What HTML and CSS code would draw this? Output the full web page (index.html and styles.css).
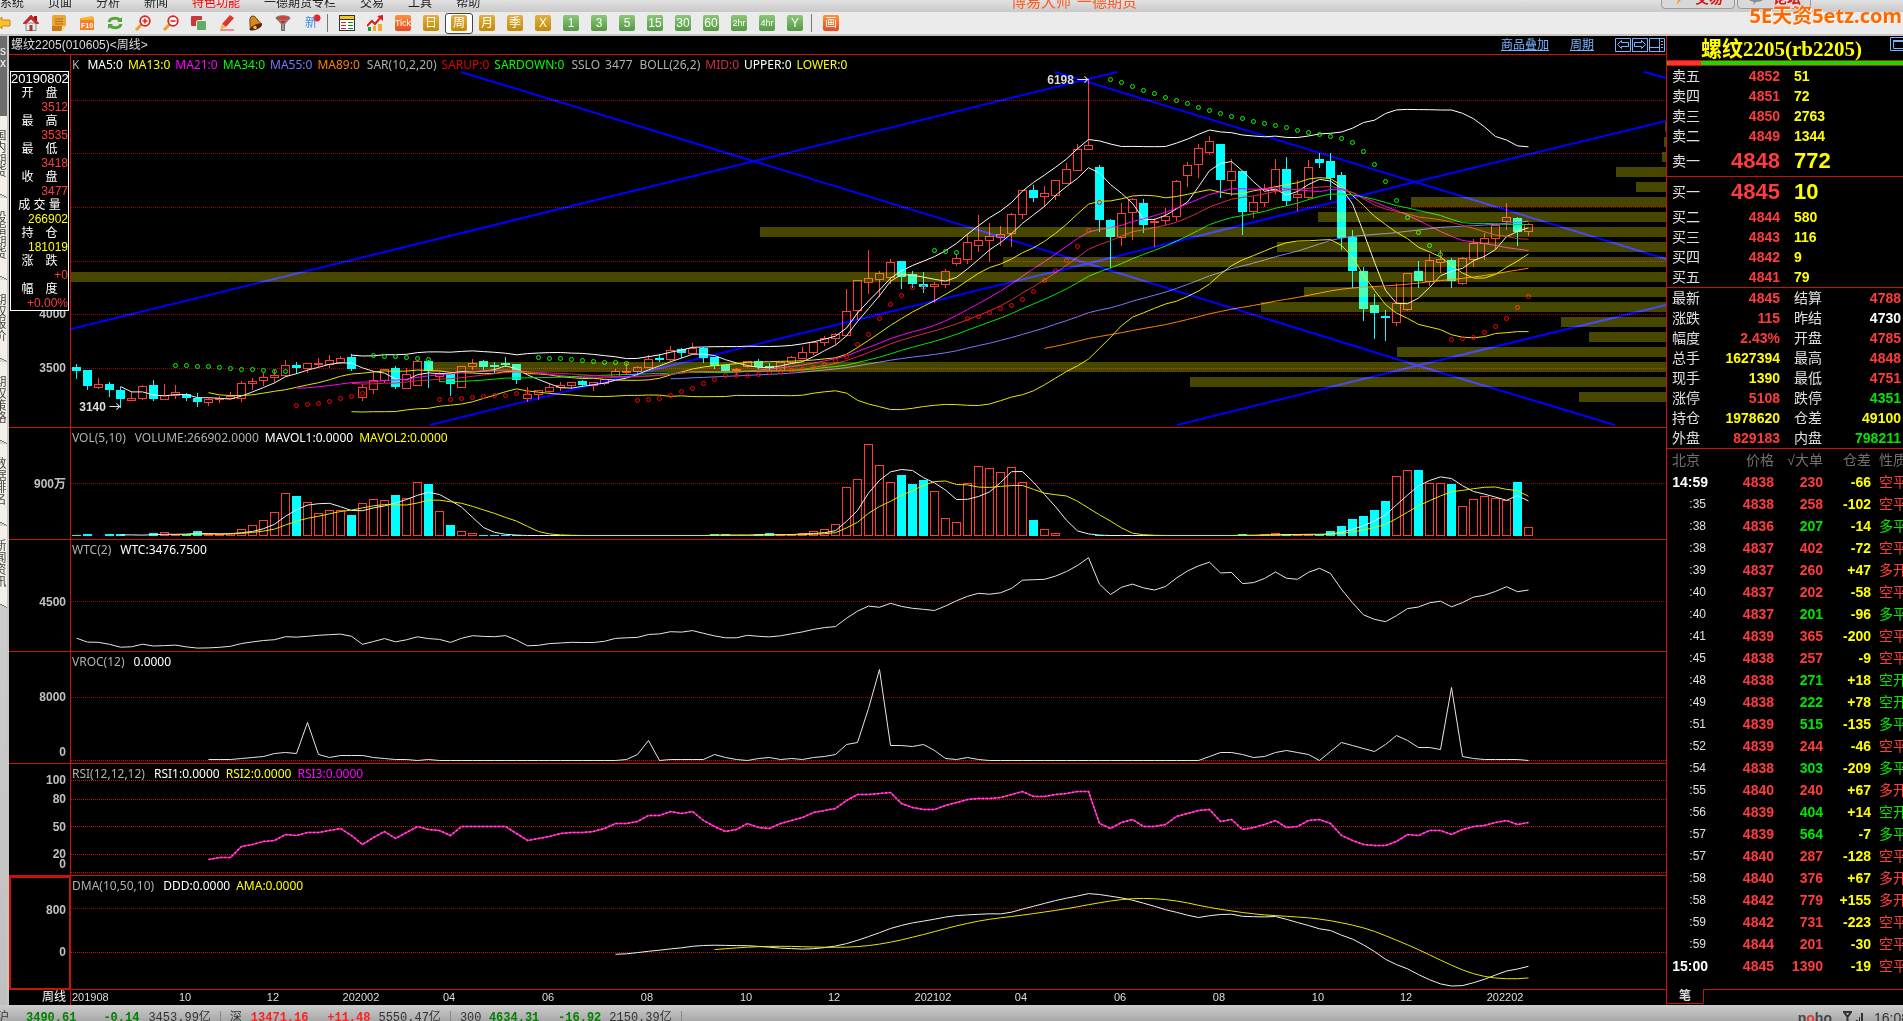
FILE: index.html
```html
<!DOCTYPE html>
<html lang="zh-CN">
<head>
<meta charset="utf-8">
<title>螺纹2205 周线</title>
<link rel="stylesheet" href="styles.css">
</head>
<body>
<header class="menubar">
  <nav class="menu">
    <a href="#">系统</a><a href="#">页面</a><a href="#">分析</a><a href="#">新闻</a><a href="#" class="hot">特色功能</a><a href="#">一德期货专栏</a><a href="#">交易</a><a href="#">工具</a><a href="#">帮助</a>
  </nav>
  <div class="app-name"><span>博易大师</span><span>一德期货</span></div>
  <div class="menu-actions">
    <button type="button"><svg width="14" height="14" viewBox="0 0 14 14"><path d="M9 0 2 8h4l-3 6 9-9H8l4-5z" fill="#f79a1c"/></svg>交易</button>
    <button type="button"><svg width="18" height="14" viewBox="0 0 18 14"><path d="M1 1h16v6c0 2-3 4-8 4l-3 3 1-3C3 10 1 9 1 7z" fill="#8c8c8c"/></svg>论坛</button>
  </div>
</header>
<div class="toolbar">
  <button type="button" aria-label="后退"><svg viewBox="0 0 16 16"><path d="M1 8l6-6v3h8v6H7v3z" fill="#fbc02d" stroke="#c98a10"/></svg></button>
  <button type="button" aria-label="主页"><svg viewBox="0 0 16 16"><path d="M11 1h3v5h-3z" fill="#a11"/><path d="M3 8h10v7.500H3z" fill="#e9e9e9" stroke="#888"/><path d="M8 0 0 8.500h3L8 4l5 4.500h3z" fill="#d42424" stroke="#8c1212" stroke-width=".6"/><path d="M6.500 10h3v6h-3z" fill="#a33"/></svg></button>
  <button type="button" aria-label="记事"><svg viewBox="0 0 16 16"><path d="M2 0h12l1 2v9l-4 5H1V2z" fill="#eba733"/><path d="M1 11h10l-1 5H1z" fill="#c87a18"/><path d="M4 4h8M4 6.500h8M4 9h8" stroke="#b06f14"/><path d="M15 11l-4 5v-5z" fill="#f8dca0"/></svg></button>
  <button type="button" aria-label="F10"><svg viewBox="0 0 16 16"><path d="M1 3h14v12H1z" fill="#f4802c"/><path d="M1 3l13-2 1 4H1z" fill="#f9b233"/><text x="8" y="12.500" text-anchor="middle" class="svg-f10">F10</text></svg></button>
  <button type="button" aria-label="刷新"><svg viewBox="0 0 16 16" fill="none" stroke="#57a437" stroke-width="3"><path d="M2 7c1-4 7-5 11-2M14 9c-1 4-7 5-11 2"/><path d="M15 2v5h-5zM1 14V9h5z" fill="#57a437" stroke="none"/></svg></button>
  <button type="button" aria-label="放大"><svg viewBox="0 0 16 16"><path d="M7 9l-6 6" stroke="#f0a020" stroke-width="3"/><circle cx="10" cy="6" r="4.800" fill="#fff" stroke="#e2231a" stroke-width="1.800"/><path d="M7.500 6h5M10 3.500v5" stroke="#e2231a" stroke-width="1.600"/></svg></button>
  <button type="button" aria-label="缩小"><svg viewBox="0 0 16 16"><path d="M7 9l-6 6" stroke="#f0a020" stroke-width="3"/><circle cx="10" cy="6" r="4.800" fill="#fff" stroke="#e2231a" stroke-width="1.800"/><path d="M7.500 6h5" stroke="#e2231a" stroke-width="1.600"/></svg></button>
  <button type="button" aria-label="窗口"><svg viewBox="0 0 16 16"><rect x="0" y="1" width="11" height="10" rx="1" fill="#c8373a"/><rect x="5.500" y="5.500" width="10" height="10" rx="1.500" fill="#63ab62" stroke="#e7f0e7"/></svg></button>
  <button type="button" aria-label="画线"><svg viewBox="0 0 16 16"><path d="M1 15h14" stroke="#e33"/><path d="M3 9l8-9 4 3-8 9z" fill="#e0352b"/><path d="M3 9l4 3-6 3z" fill="#f4b650"/></svg></button>
  <button type="button" aria-label="预警"><svg viewBox="0 0 16 16"><path d="M5 1c5 0 5 5 10 8L3 15C4 9 1 3 5 1z" fill="#d98a1e" stroke="#6d3a08"/><ellipse cx="9" cy="12" rx="6.500" ry="2.600" transform="rotate(-25 9 12)" fill="#5a2408"/><circle cx="8" cy="12.500" r="1.700" fill="#f5c34e"/></svg></button>
  <button type="button" aria-label="筛选"><svg viewBox="0 0 16 16"><path d="M1 3l5.500 6v6.500h3V9L15 3z" fill="#999" stroke="#666"/><ellipse cx="8" cy="3" rx="7" ry="2.200" fill="#e33a34" stroke="#777"/><path d="M5 6h6L8 9z" fill="#d22"/></svg></button>
  <button type="button" class="new" aria-label="新功能">新</button>
  <i class="sep"></i>
  <button type="button" aria-label="报价"><svg viewBox="0 0 16 16"><rect x=".5" y=".5" width="15" height="15" fill="#fff" stroke="#333"/><path d="M1 1h14v3H1z" fill="#f3c61e"/><path d="M1 4.500h14" stroke="#333"/><path d="M2 7.500h5M2 10.500h5M2 13.500h5" stroke="#d22"/><path d="M9 7.500h5M9 10.500h5M9 13.500h5" stroke="#181"/></svg></button>
  <button type="button" aria-label="走势"><svg viewBox="0 0 16 16"><path d="M1 12h3v4H1z" fill="#2a9a2a"/><path d="M6 11h3v5H6zM11 9h4v7h-4z" fill="#f1ae26"/><path d="M0 11l5-5 3 3 6-7" fill="none" stroke="#d81e1e" stroke-width="2"/><path d="M16 0v6l-6-5z" fill="#d81e1e"/></svg></button>
  <button type="button"><b class="chip orange tiny">Tick</b></button>
  <button type="button"><b class="chip gold">日</b></button>
  <button type="button" class="selected"><b class="chip gold">周</b></button>
  <button type="button"><b class="chip gold">月</b></button>
  <button type="button"><b class="chip gold">季</b></button>
  <button type="button"><b class="chip gold">X</b></button>
  <button type="button"><b class="chip green">1</b></button>
  <button type="button"><b class="chip green">3</b></button>
  <button type="button"><b class="chip green">5</b></button>
  <button type="button"><b class="chip green">15</b></button>
  <button type="button"><b class="chip green">30</b></button>
  <button type="button"><b class="chip green">60</b></button>
  <button type="button"><b class="chip green tiny">2hr</b></button>
  <button type="button"><b class="chip green tiny">4hr</b></button>
  <button type="button"><b class="chip green">Y</b></button>
  <i class="sep"></i>
  <button type="button"><b class="chip orange">画</b></button>
</div>
<div class="watermark">5E天资5etz.com</div>

<div class="workspace">
  <nav class="side-tabs">
    <a href="#" class="active"><span>s</span><span>x</span></a>
    <a href="#">国内期货</a>
    <a href="#">股指期货</a>
    <a href="#">期权报价</a>
    <a href="#">期权策略</a>
    <a href="#">数据排名</a>
    <a href="#">新闻资讯</a>
  </nav>

  <main class="charts">
    <div class="chart-title">
      <span>螺纹2205(010605)&lt;周线&gt;</span>
      <span class="chart-links">
        <a href="#">商品叠加</a><a href="#">周期</a>
        <span class="nav-boxes">
          <button type="button" aria-label="向左"><svg viewBox="0 0 16 14"><path d="M.5.5h15v13H.5zM2.500 6.500l4-4v2h7v4h-7v2z"/></svg></button>
          <button type="button" aria-label="向右"><svg viewBox="0 0 16 14"><path d="M.5.5h15v13H.5zM13.500 6.500l-4-4v2h-7v4h7v2z"/></svg></button>
          <button type="button" aria-label="布局"><svg viewBox="0 0 16 14"><path d="M.5.5h15v13H.5zM10.500 1v12M1 9.500h9.500M12 3.500h2M12 6.500h2M12 9.500h2"/></svg></button>
        </span>
      </span>
    </div>

    <section class="pane" id="main">
      <div class="axis">
        <dl class="info">
          <dt class="date">20190802</dt>
          <dt>开　盘</dt><dd>3512</dd>
          <dt>最　高</dt><dd>3535</dd>
          <dt>最　低</dt><dd>3418</dd>
          <dt>收　盘</dt><dd>3477</dd>
          <dt>成 交 量</dt><dd class="yellow">266902</dd>
          <dt>持　仓</dt><dd class="yellow">181019</dd>
          <dt>涨　跌</dt><dd>+0</dd>
          <dt>幅　度</dt><dd>+0.00%</dd>
        </dl>
      </div>
      <div class="plot">
        <p class="legend">
          <span>K</span><span class="white group">MA5:0</span><span class="yellow">MA13:0</span><span class="magenta">MA21:0</span><span class="lime">MA34:0</span><span class="violet">MA55:0</span><span class="orange-t">MA89:0</span><span class="group">SAR(10,2,20)</span><span class="red">SARUP:0</span><span class="lime">SARDOWN:0</span><span class="group">SSLO</span><span>3477</span><span class="group">BOLL(26,2)</span><span class="crimson">MID:0</span><span class="white">UPPER:0</span><span class="yellow">LOWER:0</span>
        </p>
      </div>
    </section>
    <section class="pane" id="vol"><div class="axis"></div><div class="plot">
      <p class="legend sub"><span>VOL(5,10)</span><span>VOLUME:266902.0000</span><span class="white">MAVOL1:0.0000</span><span class="yellow">MAVOL2:0.0000</span></p></div></section>
    <section class="pane" id="wtc"><div class="axis"></div><div class="plot">
      <p class="legend sub"><span>WTC(2)</span><span class="white">WTC:3476.7500</span></p></div></section>
    <section class="pane" id="vroc"><div class="axis"></div><div class="plot">
      <p class="legend sub"><span>VROC(12)</span><span class="white">0.0000</span></p></div></section>
    <section class="pane" id="rsi"><div class="axis"></div><div class="plot">
      <p class="legend sub"><span>RSI(12,12,12)</span><span class="white">RSI1:0.0000</span><span class="yellow">RSI2:0.0000</span><span class="magenta">RSI3:0.0000</span></p></div></section>
    <section class="pane focused" id="dma"><div class="axis"></div><div class="plot">
      <p class="legend sub"><span>DMA(10,50,10)</span><span class="white">DDD:0.0000</span><span class="yellow">AMA:0.0000</span></p></div></section>
    <div class="time-axis"><span class="period">周线</span><div id="dates"></div></div>
  </main>

  <aside class="quote">
    <h1>螺纹2205(rb2205)<button type="button" aria-label="窗口"><svg viewBox="0 0 16 14"><path d="M.5.5h16v13H.5zM3.500 4.500h12v7h-12zM3 3.500h13"/></svg></button></h1>
    <div class="ratio"><i></i></div>
    <table class="book">
      <tr><th>卖五</th><td>4852</td><td>51</td></tr>
      <tr><th>卖四</th><td>4851</td><td>72</td></tr>
      <tr><th>卖三</th><td>4850</td><td>2763</td></tr>
      <tr><th>卖二</th><td>4849</td><td>1344</td></tr>
      <tr class="best"><th>卖一</th><td>4848</td><td>772</td></tr>
    </table>
    <table class="book">
      <tr class="best"><th>买一</th><td>4845</td><td>10</td></tr>
      <tr><th>买二</th><td>4844</td><td>580</td></tr>
      <tr><th>买三</th><td>4843</td><td>116</td></tr>
      <tr><th>买四</th><td>4842</td><td>9</td></tr>
      <tr><th>买五</th><td>4841</td><td>79</td></tr>
    </table>
    <table class="stats">
      <tr><th>最新</th><td>4845</td><th>结算</th><td>4788</td></tr>
      <tr><th>涨跌</th><td>115</td><th>昨结</th><td class="white">4730</td></tr>
      <tr><th>幅度</th><td>2.43%</td><th>开盘</th><td>4785</td></tr>
      <tr><th>总手</th><td class="yellow">1627394</td><th>最高</th><td>4848</td></tr>
      <tr><th>现手</th><td class="yellow">1390</td><th>最低</th><td>4751</td></tr>
      <tr><th>涨停</th><td>5108</th><th>跌停</th><td class="green-t">4351</td></tr>
      <tr><th>持仓</th><td class="yellow">1978620</td><th>仓差</th><td class="yellow">49100</td></tr>
      <tr><th>外盘</th><td>829183</td><th>内盘</th><td class="green-t">798211</td></tr>
    </table>
    <table class="ticks">
      <thead><tr><th>北京</th><th>价格</th><th>√大单</th><th>仓差</th><th>性质</th></tr></thead>
      <tbody id="ticks"></tbody>
    </table>
    <div class="quote-tabs"><button type="button">笔</button><i></i></div>
  </aside>
</div>

<footer class="status">
  <div class="index"><span>沪</span><b class="down">3490.61</b><b class="down chg">-0.14</b><span>3453.99亿</span></div>
  <div class="index"><span>深</span><b class="up">13471.16</b><b class="up chg">+11.48</b><span>5550.47亿</span></div>
  <div class="index"><span>300</span><b class="down">4634.31</b><b class="down chg">-16.92</b><span>2150.39亿</span></div>
  <div class="system"><b>p<em>o</em>bo</b>
    <svg width="22" height="14" viewBox="0 0 22 14"><path d="M1 1h9M2 1l3.500 5L9 1M5.500 5v9" fill="none" stroke="#333" stroke-width="2"/><path d="M11 12h2v2h-2zM14 9h2v5h-2zM17 6h1v8h-1zM19 2h2v12h-2z" fill="#333"/></svg>
    <span>16:08</span></div>
</footer>
<script src="chart.js"></script>
</body>
</html>
```
FILE: styles.css
```css
* { box-sizing: border-box; }
body {
  margin: 0;
  height: 100vh;
  display: flex;
  flex-direction: column;
  overflow: hidden;
  position: relative;
  background: #c8c8c8;
  font: 12px/14px "Liberation Sans", "Noto Sans CJK SC", sans-serif;
}
button { font: inherit; padding: 0; margin: 0; border: 0; background: none; color: inherit; }
a { color: inherit; text-decoration: none; }
table { border-collapse: collapse; table-layout: fixed; width: 100%; }
th, td { padding: 0; white-space: nowrap; }

.white { color: #fff; }
.yellow { color: #ff0; }
.magenta { color: #f0f; }
.lime { color: #0f0; }
.violet { color: #7878ff; }
.orange-t { color: #ff8000; }
.red { color: #e00000; }
.crimson { color: #d02c48; }

/* menu bar */
.menubar {
  flex: 0 0 12px;
  display: flex;
  align-items: flex-end;
  overflow: hidden;
  background: linear-gradient(#e2e2e2, #c9c9c9);
  color: #1c1c1c;
}
.menu { display: flex; gap: 24px; width: 1011px; line-height: 20px; margin-bottom: -1px; white-space: nowrap; }
.menu .hot { color: #f00; }
.app-name { display: flex; gap: 6px; flex: 1; font-size: 15px; line-height: 20px; color: #ff5a1e; }
.menu-actions { display: flex; gap: 2px; margin-right: 92px; align-self: flex-end; margin-bottom: 3px; }
.menu-actions button {
  display: flex; align-items: center; justify-content: center; gap: 8px;
  width: 74px; height: 22px;
  border: 1px solid #9a9a9a; border-radius: 4px;
  background: #d9d9d9; color: #d81818;
  font-size: 14px; font-weight: bold;
}

/* tool bar */
.toolbar {
  flex: 0 0 24px;
  display: flex;
  align-items: center;
  margin-left: -11px;
  background: #ebebeb;
  border-bottom: 2px solid #c9c5c1;
}
.toolbar button { flex: 0 0 28px; height: 21px; display: flex; align-items: center; justify-content: center; }
.toolbar svg { width: 16px; height: 16px; }
.toolbar .selected { border: 1px solid #444; border-radius: 3px; background: #fff; }
.toolbar .sep { flex: 0 0 8px; height: 18px; background: linear-gradient(#777, #777) 2px 0 / 1px 100% no-repeat; }
.toolbar .new {
  color: #3c8ce8;
  background: radial-gradient(circle at 20px 5px, #f02020 3px, transparent 4px);
}
.svg-f10 { font: bold 7px "Liberation Sans", sans-serif; fill: #fff; }
.chip {
  width: 16px; height: 16px; border-radius: 2px;
  font-weight: normal; font-size: 12px; line-height: 16px; text-align: center;
  color: #fff;
  display: flex; justify-content: center;
}
.gold { background: linear-gradient(#dfb23c, #c48a06); }
.green { background: linear-gradient(#8ac878, #559a44); }
.orange { background: linear-gradient(#f9953c, #ea4a24); }
.tiny { font-size: 9px; }

.watermark {
  position: absolute; right: 1px; top: 3px;
  font: bold 20px/26px "Noto Sans", "Noto Sans CJK SC", sans-serif;
  color: #ff6a00;
  text-shadow: 1px 1px 0 #fff, -1px 0 0 #fbe8d8;
}

.workspace { flex: 1; min-height: 0; display: flex; background: #000; }

/* side tabs */
.side-tabs {
  flex: 0 0 9px;
  display: flex; flex-direction: column;
  overflow: hidden;
  background: linear-gradient(#e0e0e0, #c0c0c0);
  border-right: 2px solid #c9c5c1;
  color: #444;
}
.side-tabs a {
  flex: 0 0 82px;
  writing-mode: vertical-rl;
  display: flex; align-items: flex-start; justify-content: center;
  width: 7px;
  padding: 0 2px 8px 0;
  line-height: 12px;
  background: linear-gradient(26deg, transparent 3px, #777 3px, #777 4px, #f2f0e9 4px);
}
.side-tabs .active {
  flex-basis: 80px;
  writing-mode: horizontal-tb;
  flex-direction: column; justify-content: flex-start; align-items: flex-start;
  padding-top: 9px;
  background: #6c6c6c; color: #fff;
}

/* charts */
.charts {
  flex: 1; min-width: 0;
  display: grid;
  grid-template-rows: 19px minmax(0, 373fr) repeat(4, minmax(0, 112fr)) minmax(0, 114fr) 15px;
}
.chart-title {
  display: flex; justify-content: space-between; align-items: center;
  padding-left: 2px;
  color: #ddd;
  border-bottom: 1px solid #c81400;
}
.chart-links { display: flex; gap: 21px; color: #78b4ff; }
.chart-links a { text-decoration: underline; }
.nav-boxes { display: flex; gap: 1px; margin-right: 1px; }
.nav-boxes button, .quote h1 button { width: 16px; height: 14px; display: block; }
.nav-boxes svg, .quote h1 svg { width: 16px; height: 14px; display: block; fill: none; stroke: #78b4ff; }

.pane { display: grid; grid-template-columns: 62px minmax(0, 1fr); border-bottom: 1px solid #c81400; min-height: 0; }
.axis { position: relative; border-right: 1px solid #c81400; color: #c0c0c0; }
.focused .axis { border: 2px solid #c81400; border-bottom-width: 1px; }
.axis .tick { position: absolute; right: 4px; transform: translateY(-50%); font-weight: bold; line-height: 12px; }
.focused .tick { right: 3px; }
.plot { position: relative; min-width: 0; min-height: 0; overflow: hidden; }
.plot svg { position: absolute; inset: 0; width: 100%; height: 100%; display: block; }
.legend {
  display: flex; gap: 5px; margin: 0; padding: 2px 0 0 1px;
  font: 12px/16px "Noto Sans", sans-serif;
  color: #b0b0b0; white-space: nowrap;
  position: relative; z-index: 1;
}
.legend .group { margin-left: 2px; }
.legend .group:nth-child(2) { margin-left: 3px; }
.legend.sub { gap: 6px; }
.legend.sub span:first-child { margin-right: 3px; }
.callout {
  position: absolute; transform: translate(-100%, -50%);
  display: flex; align-items: center; gap: 3px;
  color: #ddd; font-weight: bold; line-height: 14px;
}
.callout i { width: 11px; height: 7px; background: linear-gradient(#ddd, #ddd) 0 3px / 100% 1px no-repeat; position: relative; }
.callout i::after { content: ""; position: absolute; right: 1px; top: 1px; width: 4px; height: 4px; border: solid #ddd; border-width: 1px 1px 0 0; transform: rotate(45deg); }

.info {
  position: absolute; z-index: 2; top: 16px; left: 1px; right: 1px;
  margin: 0; border: 1px solid #fff; background: #000;
  color: #fff; line-height: 14px;
}
.info dt { text-align: center; white-space: pre; height: 14px; }
.info .date { font-size: 13px; }
.info dd { margin: 0; text-align: right; color: #ff3c3c; height: 14px; }
.info dd.yellow { color: #ff0; }

.time-axis { display: grid; grid-template-columns: 62px 1fr; color: #ddd; font-size: 11px; line-height: 14px; overflow: hidden; }
.period { text-align: right; padding-right: 4px; border-right: 1px solid #c81400; color: #fff; font-size: 12px; }
#dates { position: relative; }
#dates span { position: absolute; transform: translateX(-50%); }
#dates span:first-child { transform: none; }

/* quote panel */
.quote {
  flex: 0 0 237px;
  display: flex; flex-direction: column;
  overflow: hidden;
  border-left: 1px solid #c81400;
  font-size: 14px; font-weight: bold;
}
.quote h1 {
  margin: 0; height: 24px; flex: none;
  display: flex; justify-content: space-between;
  padding: 1px 0 0 34px;
  font: bold 21px/24px "Liberation Serif", "Noto Sans CJK SC", serif;
  color: #ff0;
  white-space: nowrap;
}
.quote h1 button { margin-right: -3px; }
.ratio { flex: none; border: solid #c81400; border-width: 1px 0; height: 6px; background: #00e600; padding-left: 1px; }
.ratio i { display: block; width: 14%; height: 4px; background: #ff3232; }
.quote th { font-weight: normal; color: #e0e0e0; text-align: left; }
.quote td { color: #ff3c3c; text-align: right; }
.book, .stats { line-height: 20px; border-bottom: 1px solid #c81400; flex: none; border-collapse: separate; border-spacing: 0; }
.book tr, .stats tr { height: 20px; }
.book th:first-child, .stats th:first-child { width: 45px; padding-left: 5px; }
.book td:nth-child(2), .stats td:nth-child(2) { width: 68px; }
.book td:nth-child(3) { color: #ff0; text-align: left; padding-left: 14px; }
.book .best { height: 30px; }
.book .best td { font-size: 22px; }
.stats th:nth-child(3) { padding-left: 14px; width: 50px; }
.stats td:nth-child(4) { padding-right: 2px; }
.quote td.white { color: #fff; }
.quote td.yellow { color: #ff0; }
.quote td.green-t { color: #00e600; }
.ticks { line-height: 22px; }
.ticks tr { height: 22px; }
.ticks th { color: #707070; text-align: right; }
.ticks th:nth-child(1) { width: 41px; text-align: left; padding-left: 5px; }
.ticks th:nth-child(2) { width: 66px; }
.ticks th:nth-child(3) { width: 49px; }
.ticks th:nth-child(4) { width: 48px; }
.ticks th:nth-child(5), .ticks td:nth-child(5) { text-align: left; padding-left: 8px; font-weight: normal; }
.ticks td:nth-child(1) { color: #e0e0e0; font-weight: normal; font-size: 12px; padding-right: 2px; }
.ticks .full td:nth-child(1) { font-weight: bold; font-size: 14px; padding-right: 0; color: #fff; }
.ticks td:nth-child(4) { color: #ff0; }
.quote .ticks td.buy { color: #00e600; }
.quote-tabs { margin-top: auto; flex: none; display: flex; height: 16px; }
.quote-tabs button {
  width: 37px; height: 15px; color: #ddd; font-size: 12px; line-height: 14px;
  border: solid #c81400; border-width: 0 1px 1px 0; border-radius: 0 0 2px 2px;
}
.quote-tabs i { flex: 1; border-top: 1px solid #c81400; }

/* status bar */
.status {
  flex: 0 0 16px;
  display: flex;
  overflow: hidden;
  background: linear-gradient(#cdcdcd, #a8a8a8);
  font: 12px/14px "Liberation Mono", "Noto Sans CJK SC", monospace;
  color: #333;
  padding-top: 6px;
}
.index { display: flex; gap: 8px; padding: 0 9px; border-right: 1px solid #888; white-space: nowrap; }
.index:first-child { padding-left: 0; margin-left: -3px; gap: 9px; }
.index > :first-child { width: 13px; }
.index:first-child > :first-child { width: 20px; }
.index:nth-child(3) > :first-child { width: 21px; }
.chg { width: 54px; text-align: right; }
.down { color: #008200; }
.up { color: #ff2020; }
.system { margin-left: auto; display: flex; gap: 10px; margin-right: -6px; font: 14px/14px "Liberation Sans", sans-serif; }
.system b { color: #444; }
.system em { color: #f03030; font-style: normal; }
```
FILE: chart.js
```js
// Every series is stored on the drawing surface's own scale:
// one weekly bar each 11 units, starting at 76.5; y grows downward.
const STEP = 11, FIRST = 76.5, LEFT = 71, WIDTH = 1595;
const X = i => FIRST + STEP * i;

// direction (u = rise, d = fall), body top, body bottom, high, low
const BARS = `d367,371,364,378 d370,386,370,389 u384,387,378,388 d384,390,382,396 d390,399,387,407 u398,400,391,400 u386,398,385,399 d385,399,380,400 u395,399,384,399 u392,395,385,398 d394,398,393,400 d398,402,393,406 u399,402,398,405 u398,399,396,402 u396,398,392,398 u383,398,381,401 u381,383,378,389 u377,380,373,385 u375,377,370,382 u365,375,360,376 d365,368,362,373 u363,368,363,372 u363,364,358,366 u360,364,355,367 u358,362,356,363 d357,369,354,370 u387,397,384,400 u380,389,371,393 u369,380,369,382 d368,387,366,388 u374,388,368,388 u361,385,360,385 d361,371,360,387 u373,376,372,381 d374,384,372,395 u366,387,366,387 u363,366,359,369 d361,367,360,369 d365,366,362,372 d363,365,357,366 d364,380,364,383 u394,398,387,401 u390,394,390,399 u387,391,383,392 u385,387,382,390 u382,385,382,388 d381,385,380,386 u382,385,382,390 u379,383,379,384 u371,376,369,376 u371,372,363,374 u367,371,366,375 u359,367,355,367 d358,359,354,361 u350,359,346,360 d349,353,348,357 u348,353,343,354 d348,358,347,362 d357,366,357,368 d365,371,365,372 u369,370,368,374 u361,366,361,367 d361,367,359,368 d366,368,363,370 u362,370,362,370 u357,362,356,362 u352,358,347,358 u342,352,341,354 u338,342,336,345 u334,338,333,344 u311,335,289,335 u280,310,280,319 u278,282,250,293 u273,279,271,296 u262,277,259,283 d261,277,261,288 d274,284,271,287 d284,287,272,292 u284,286,282,302 u271,284,269,287 u258,263,254,265 u242,259,234,263 u240,245,215,251 u236,240,223,261 u234,237,226,245 u214,233,213,246 u190,214,190,218 d190,198,185,201 u193,196,186,206 u180,195,180,199 u169,183,163,183 u149,170,144,170 u145,149,79,149 d167,220,165,231 d220,237,219,267 u213,237,203,245 u199,212,198,239 d203,225,199,232 u221,222,218,246 u216,220,208,224 u181,216,180,220 u165,175,162,186 u148,164,144,177 u141,152,136,154 d144,180,144,197 u171,180,159,195 d171,212,171,234 u202,211,196,217 u189,202,184,206 u169,190,159,193 d169,201,157,205 u194,197,180,210 u167,197,160,199 d159,163,153,167 d161,178,153,199 d175,238,172,249 d237,271,230,287 d271,309,267,320 d305,313,294,338 d316,318,310,340 u303,322,283,325 u273,309,273,310 d271,281,261,287 u260,281,254,285 u259,262,250,272 d260,281,258,287 u258,283,257,284 u243,259,239,266 u238,243,233,259 u225,238,225,248 u217,221,203,229 d218,232,217,245 u224,231,223,235`
  .split(' ').map(s => {
    const [top, bottom, high, low] = s.slice(1).split(',').map(Number);
    const up = s[0] === 'u';
    return { up, top, bottom, high, low, close: up ? top : bottom };
  });

const fill = (n, v) => Array(n).fill(v);
const VOLUME = [535,534,535,534,534,535,535,533,532,534,534,531,534,534,533,529,525,520,512,493,496,502,513,510,510,515,503,499,500,495,498,482,484,511,525,531,533,
  ...fill(21, 535),534,534,535,535,534,533,534,534,533,531,529,524,487,479,444,465,482,475,484,480,491,518,522,483,466,468,472,467,482,520,529,533,
  ...fill(16, 535),534,535,534,533,534,534,534,534,531,526,519,516,510,501,476,470,470,483,483,484,506,499,496,498,500,482,527];

const VROC = [759,759,759,758,757,756,753,752,753,722,754,757,755,755,755,757,758,759,759,760,759,...fill(17, 760),759,754,740,760,759,759,759,759,754,757,759,760,758,757,759,758,759,757,756,754,744,742,708,669,745,745,746,744,750,758,759,757,759,...fill(20, 760),756,752,752,754,757,756,752,750,752,754,760,751,742,745,748,751,744,735,740,747,747,749,687,756,758,759,759,759,759,760];

const RSI = [859,857,857,846,844,841,840,834,835,832,832,830,828,835,844,837,831,838,832,826,829,830,835,826,826,826,826,826,833,840,838,836,833,832,832,831,828,823,823,821,815,815,811,813,811,820,826,831,829,823,827,828,823,820,817,812,810,808,800,794,794,793,792,803,807,809,809,805,802,799,798,798,797,794,791,796,796,794,793,791,791,823,828,822,819,826,826,824,816,813,810,809,821,819,829,827,824,820,827,826,820,819,823,835,840,844,845,845,841,834,835,830,830,834,829,826,825,822,820,824,822];

// start index, side, values
const SAR = [
  [9,'down',[365,365,366,366,367,368,369,369,370,371,371]],
  [20,'up',[405,404,403,401,398,396,393]],
  [27,'down',[355,356,356,357,358,359]],
  [33,'up',[399,399,398,397,396,395,395,393,392]],
  [42,'down',[357,358,358,359,360,361,362,362,363]],
  [51,'up',[400,399,398,395,391,388,383,379,375,375,375,374,372,371,370,369,367,364,360,356,344,334,318,304,295,287,287]],
  [78,'down',[250,251,252]],
  [81,'up',[318,316,312,308,305,299,291,280,270,260,246,230,202]],
  [94,'down',[79,82,86,90,93,97,100,103,107,110,113,116,118,121,123,125,127,130,132,134,136,138,142,151,164,181,200,217,232,245,254]],
  [125,'up',[339,338,337,332,326,318,307,296]]
];

// left edge of each price-distribution band, one band each 15 units from 122
const BANDS = [1665,1664,1662,1616,1636,1411,1318,760,1277,1003,71,1304,1261,1561,1589,1397,427,1190,1579];

const TRENDS = [
  [[71,328],[1117,71]], [[461,71],[753,160],[1086,262],[1419,365],[1615,424]],
  [[430,424],[770,340],[1086,263],[1415,181],[1666,120]], [[1055,71],[1415,181],[1666,258]],
  [[1177,424],[1420,364],[1666,304]], [[1644,71],[1666,77]]
];

const average = (a, n) => a.map((_, i) => i < n - 1 || a[i - n + 1] == null ? null
  : a.slice(i - n + 1, i + 1).reduce((s, v) => s + v, 0) / n);

const line = (values, color, start = 0, extra = '') => {
  const pts = values.map((v, i) => v == null ? '' : `${X(i + start)},${(v + .5).toFixed(1)}`).join(' ');
  return `<polyline points="${pts}" fill="none" stroke="${color}" ${extra}/>`;
};
const grid = (rows, color) => rows.map(y =>
  `<path d="M${LEFT} ${y + .5}H${LEFT + WIDTH}" stroke="${color}" stroke-dasharray="1 1" shape-rendering="crispEdges"/>`).join('');

function draw(id, top, height, labels, body) {
  const pane = document.getElementById(id);
  pane.querySelector('.plot').insertAdjacentHTML('afterbegin',
    `<svg viewBox="${LEFT} ${top} ${WIDTH} ${height}" preserveAspectRatio="none">${body}</svg>`);
  const axis = pane.querySelector('.axis');
  labels.forEach(([text, y]) => axis.insertAdjacentHTML('afterbegin',
    `<span class="tick" style="top:${((y - top) / height * 100).toFixed(2)}%">${text}</span>`));
}

const candle = (b, i) => {
  const x = X(i), c = b.up ? '#ff3c32' : '#00ffff';
  const body = b.up
    ? `<rect x="${x - 4}" y="${b.top + .5}" width="8" height="${Math.max(1, b.bottom - b.top)}" fill="none" stroke="${c}"/>`
    : `<rect x="${x - 4.5}" y="${b.top}" width="9" height="${Math.max(2, b.bottom - b.top)}" fill="${c}"/>`;
  return `<path d="M${x} ${b.high}V${b.top}M${x} ${b.bottom}V${b.low + 1}" stroke="${c}"/>${body}`;
};

// main pane
const closes = BARS.map(b => b.close);
const mid = average(closes, 26);
const spread = closes.map((_, i) => i < 25 ? 0
  : 2 * Math.sqrt(closes.slice(i - 25, i + 1).reduce((s, v) => s + (v - mid[i]) ** 2, 0) / 26));
const upper = mid.map((m, i) => m == null ? null : m - spread[i]);
const lower = mid.map((m, i) => m == null ? null : m + spread[i]);
const dots = SAR.map(([s, side, ys]) => ys.map((y, k) =>
  `<circle cx="${X(s + k)}" cy="${y + .5}" r="2" fill="none" stroke="${side === 'up' ? '#ff0000' : '#00ff00'}"/>`).join('')).join('');
draw('main', 55, 372, [['4000', 314], ['3500', 368]],
  grid([100, 153, 207, 261, 314, 368], '#a80000') +
  `<g shape-rendering="crispEdges">${BARS.map(candle).join('')}</g>` +
  line(average(closes, 5), '#f0f0f0') + line(average(closes, 13), '#e6e600') +
  line(average(closes, 21), '#f0f') + line(average(closes, 34), '#00e600') +
  line(average(closes, 55), '#7878ff') + line(average(closes, 89), '#ff8000') +
  line(mid, '#d02c48') + line(upper, '#fff') + line(lower, '#e6e600') + dots +
  BANDS.map((x, k) => `<rect x="${x}" y="${122 + 15 * k}" width="${LEFT + WIDTH - x}" height="10" fill="#ff0" fill-opacity=".28"/>`).join('') +
  TRENDS.map(t => `<polyline points="${t.map(p => p[0] + ',' + p[1]).join(' ')}" fill="none" stroke="#00f" stroke-width="2" style="mix-blend-mode:screen" transform="translate(0 1)"/>`).join(''));
const plot = document.querySelector('#main .plot');
const pct = (x, y) => `left:${((x - LEFT) / WIDTH * 100).toFixed(2)}%;top:${((y - 55) / 372 * 100).toFixed(2)}%`;
plot.insertAdjacentHTML('beforeend',
  `<span class="callout" style="${pct(1088, 79.5)}">6198<i></i></span><span class="callout" style="${pct(120, 407)}">3140<i></i></span>`);

// volume
const BASE = 536;
draw('vol', 428, 111, [['900万', 483.5]], grid([483], '#a80000') +
  `<g shape-rendering="crispEdges">${VOLUME.map((y, i) => BARS[i].up
    ? `<rect x="${X(i) - 4}" y="${y + .5}" width="8" height="${Math.max(0, BASE - y - 1)}" fill="none" stroke="#ff3c32"/>`
    : `<rect x="${X(i) - 4.5}" y="${y}" width="9" height="${BASE - y}" fill="#0ff"/>`).join('')}</g>` +
  line(average(VOLUME, 5), '#f0f0f0') + line(average(VOLUME, 10), '#e6e600'));

// weighted close
draw('wtc', 540, 111, [['4500', 601.5]], grid([601], '#a80000') +
  line(BARS.map(b => 601 + ((b.high + b.low + 2 * b.close) / 4 - 261) / 3), '#e6e6e6'));

draw('vroc', 652, 111, [['8000', 697.5], ['0', 752]], grid([697], '#a80000') + grid([760], '#e01010') +
  line(VROC, '#e6e6e6', 12));

draw('rsi', 764, 111, [['100', 780.5], ['80', 799.5], ['50', 826.5], ['20', 854.5], ['0', 864.5]],
  grid([780, 799, 826, 854, 872], '#d01010') +
  line(RSI, '#f0f', 12, 'stroke-width="1.5"') + line(RSI, '#ff6478', 12, 'stroke-width="1.5" stroke-dasharray="2 2"'));

// moving average difference
const m10 = average(closes, 10), m50 = average(closes, 50);
const ddd = m50.map((m, i) => m == null ? null : 952 + (m10[i] - m) * .513);
const ama = average(ddd, 10);
draw('dma', 876, 113, [['800', 908.5], ['0', 952.5]], grid([908], '#a80000') + grid([952], '#d01010') +
  line(ddd, '#f0f0f0') + line(ama, '#e6e600'));

document.getElementById('dates').innerHTML = [['201908', 72], ['10', 185], ['12', 273], ['202002', 361], ['04', 449], ['06', 548], ['08', 647], ['10', 746], ['12', 834], ['202102', 933], ['04', 1021], ['06', 1120], ['08', 1219], ['10', 1318], ['12', 1406], ['202202', 1505]]
  .map(([t, x]) => `<span style="left:${((x - LEFT) / WIDTH * 100).toFixed(2)}%">${t}</span>`).join('');

// trades: time, price, size, open-interest change, kind, r = sell-side red / g = green
document.getElementById('ticks').innerHTML = `14:59 4838 230 -66 空平 r|:35 4838 258 -102 空平 r|:38 4836 207 -14 多平 g|:38 4837 402 -72 空平 r|:39 4837 260 +47 多开 r|:40 4837 202 -58 空平 r|:40 4837 201 -96 多平 g|:41 4839 365 -200 空平 r|:45 4838 257 -9 空平 r|:48 4838 271 +18 空开 g|:49 4838 222 +78 空开 g|:51 4839 515 -135 多平 g|:52 4839 244 -46 空平 r|:54 4838 303 -209 多平 g|:55 4840 240 +67 多开 r|:56 4839 404 +14 空开 g|:57 4839 564 -7 多平 g|:57 4840 287 -128 空平 r|:58 4840 376 +67 多开 r|:58 4842 779 +155 多开 r|:59 4842 731 -223 空平 r|:59 4844 201 -30 空平 r|15:00 4845 1390 -19 空平 r`
  .split('|').map(r => {
    const [t, p, v, d, k, c] = r.split(' '), cls = c === 'g' ? ' class="buy"' : '';
    return `<tr${t[0] === ':' ? '' : ' class="full"'}><td>${t}</td><td>${p}</td><td${cls}>${v}</td><td>${d}</td><td${cls}>${k}</td></tr>`;
  }).join('');
```
